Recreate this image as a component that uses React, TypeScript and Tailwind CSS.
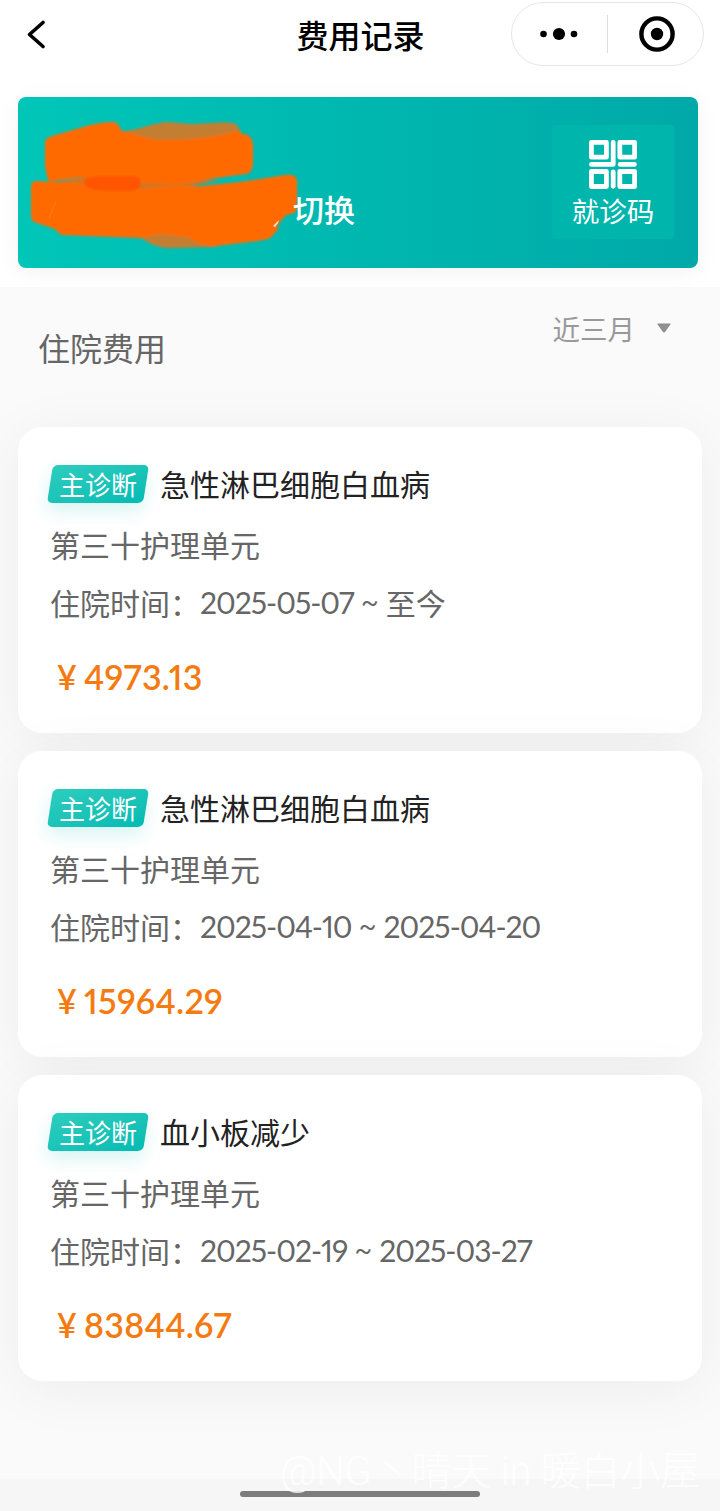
type FeeRecord = {
  diagnosis: string;
  unit: string;
  period: { from: string; to: string };
  amount: string;
};

const records: FeeRecord[] = [
  {
    diagnosis: "急性淋巴细胞白血病",
    unit: "第三十护理单元",
    period: { from: "2025-05-07", to: "至今" },
    amount: "4973.13",
  },
  {
    diagnosis: "急性淋巴细胞白血病",
    unit: "第三十护理单元",
    period: { from: "2025-04-10", to: "2025-04-20" },
    amount: "15964.29",
  },
  {
    diagnosis: "血小板减少",
    unit: "第三十护理单元",
    period: { from: "2025-02-19", to: "2025-03-27" },
    amount: "83844.67",
  },
];

function NavBar() {
  return (
    <header className="flex h-[68px] items-center justify-between pr-4 pl-[26px]">
      <div className="w-[184px]">
        <svg width="20" height="30" viewBox="0 0 20 30" fill="none" stroke="#000" strokeWidth="3.6" strokeLinecap="round" strokeLinejoin="round">
          <path d="M17 3.500 3.500 15.500 17 27.500" />
        </svg>
      </div>
      <h1 className="text-[32px] leading-10 font-medium text-black">费用记录</h1>
      <div className="flex h-16 w-[193px] items-center rounded-full border border-[#e6e6e6] bg-white">
        <div className="flex w-[95px] justify-center">
          <svg width="40" height="14" viewBox="0 0 40 14" fill="#000">
            <circle cx="4.5" cy="7" r="3.3" />
            <circle cx="20" cy="7" r="6.1" />
            <circle cx="35" cy="7" r="3.3" />
          </svg>
        </div>
        <div className="h-[38px] w-px bg-[#dcdcdc]" />
        <div className="flex flex-1 justify-center pl-[3px]">
          <svg width="36" height="36" viewBox="0 0 36 36">
            <circle cx="18" cy="18" r="15.6" fill="none" stroke="#000" strokeWidth="4.4" />
            <circle cx="18" cy="18" r="6.2" fill="#000" />
          </svg>
        </div>
      </div>
    </header>
  );
}

function QrIcon() {
  return (
    <svg width="48" height="49" viewBox="0 0 48 49" fill="none" stroke="#fff" strokeWidth="4.8" strokeLinecap="round" strokeLinejoin="round">
      <rect x="2.4" y="2.4" width="15" height="14.8" />
      <rect x="30.8" y="2.4" width="14.8" height="14.8" />
      <rect x="2.4" y="31.5" width="15" height="15" />
      <rect x="30.8" y="31.5" width="14.8" height="15" />
      <path d="M24.200 2.500V24.400H2.500" />
      <path d="M31.200 24.400h14.200" />
      <path d="M24.200 31.800v14.500" />
    </svg>
  );
}

// Marker strokes that hide the patient's name and card number
function Scribble() {
  return (
    <svg className="absolute top-0 left-0" width="300" height="171" viewBox="18 97 300 171">
      <defs>
        <filter id="soft" x="-5%" y="-5%" width="110%" height="110%">
          <feGaussianBlur stdDeviation="1.1" />
        </filter>
      </defs>
      <g filter="url(#soft)">
        <path fill="#c47e30" d="M125 131C146 128 152 123 168 122L190 124C210 124 230 120 237 125L243 136 200 146 140 144Z" />
        <path fill="#c47e30" d="M134 232C146 243 158 248 170 248L216 247 230 236 190 226Z" />
        <path fill="#d67421" d="M48 184 82 177 140 181 220 180 130 198 46 192Z" />
        <path
          fill="#ff6a00"
          d="M45 142Q45 138 52 136L90 125Q112 120 117 123L122 131C138 134 145 139 160 140 190 140 215 137 238 131L243 134Q253 134 253 148V162Q253 173 246 174L216 178 180 184 120 182 80 177 50 182Q47 181 45 165Z"
        />
        <path
          fill="#ff6a00"
          d="M31 186Q31 181 37 181L80 184 130 190 165 186 200 186 240 182 285 175Q296 174 297 180L297 206Q297 211 294 213L286 215 276 227 280 227Q276 231 274 234 271 238 268 239L258 241 216 246C204 246 196 243 188 237L160 234 140 238 62 235Q58 233 55 229L34 222Q31 220 31 215Z"
        />
        <path fill="#ff5500" d="M84 181Q87 177 98 176H132Q140 175 141 182 141 190 132 191L104 191Q88 190 84 184Z" />
      </g>
      <path d="m273 226 6-6-1 3-3 4Z" fill="#fff" opacity=".8" />
      <path d="m49 219 7-18" stroke="#ff9140" strokeWidth="1" opacity=".4" />
    </svg>
  );
}

function PatientBanner() {
  return (
    <section className="px-[18px] pt-[29px] pb-[19px]">
      <div className="relative flex h-[171px] w-[680px] items-start justify-between rounded-lg bg-gradient-to-r from-[#00c6b8] to-[#00a9a7] pr-6 shadow-[0_4px_24px_rgba(0,0,0,0.05)]">
        <Scribble />
        <span className="relative pt-[90px] pl-[275px] text-[31px] leading-[44px] font-medium text-white">切换</span>
        <button type="button" className="mt-7 flex h-[114px] w-[122px] flex-col items-center rounded bg-[#00b5ac] pt-[15px] text-white">
          <QrIcon />
          <span className="text-[27.5px] leading-[42px]">就诊码</span>
        </button>
      </div>
    </section>
  );
}

function FilterBar() {
  return (
    <div className="flex h-[140px] items-start justify-between pr-[49px] pl-[38px]">
      <h2 className="pt-9 text-[32px] leading-[48px] text-[#666]">住院费用</h2>
      <button type="button" className="flex items-center pt-5 text-[27.5px] leading-[42px] text-[#999]">
        近三月
        <svg className="ml-[22px]" width="14" height="10" viewBox="0 0 14 10" fill="#8f8f8f">
          <path d="M1 .5h12q1 0 .4 1L8 9q-1 1-2 0L.6 1.500Q0 .5 1 .5Z" />
        </svg>
      </button>
    </div>
  );
}

function Num({ children }: { children: string }) {
  return <span className="font-['Lato'] tracking-[-1px] proportional-nums">{children}</span>;
}

function RecordCard({ record }: { record: FeeRecord }) {
  return (
    <article className="h-[306px] rounded-[24px] bg-white pt-[33px] pl-[30px] shadow-[0_8px_60px_rgba(0,0,0,0.055)]">
      <div className="flex h-12 items-center">
        <div className="relative flex h-[38px] w-[100px] items-center justify-center">
          <div className="absolute inset-x-[2px] inset-y-0 -skew-x-[9deg] rounded-[5px] bg-gradient-to-br from-[#2ccdbd] to-[#00bbb3] shadow-[0_8px_18px_rgba(0,190,178,0.16)]" />
          <span className="relative text-[26px] leading-[38px] text-white">主诊断</span>
        </div>
        <h3 className="-mt-0.5 ml-3 text-[30px] leading-[48px] text-[#222]">{record.diagnosis}</h3>
      </div>
      <p className="mt-[7px] pl-0.5 text-[30px] leading-[58px] text-[#666]">{record.unit}</p>
      <p className="flex pl-0.5 text-[30px] leading-[58px] text-[#666]">
        住院时间：<Num>{record.period.from}</Num>
        <span className="w-8 text-center font-['Roboto'] text-[26px]">~</span>
        {record.period.to === "至今" ? record.period.to : <Num>{record.period.to}</Num>}
      </p>
      <p className="mt-5 flex pl-[9px] font-['Lato'] text-[34px] leading-[52px] font-semibold text-[#f47b12]">
        <span className="w-[27px]">¥</span>
        <span className="tracking-[0.3px] proportional-nums">{record.amount}</span>
      </p>
    </article>
  );
}

export default function App() {
  return (
    <div className="relative flex h-[1511px] w-[720px] flex-col overflow-hidden bg-[#fafafa] font-['Noto_Sans_CJK_SC',sans-serif]">
      <div className="bg-white">
        <NavBar />
        <PatientBanner />
      </div>
      <FilterBar />
      <main className="flex flex-col gap-[18px] px-[18px]">
        {records.map((record) => (
          <RecordCard key={record.period.from} record={record} />
        ))}
      </main>
      <footer className="mt-auto flex h-8 justify-center bg-[#f6f6f6] pt-3">
        <div className="h-1.5 w-60 rounded-full bg-[#7d7d7d]" />
      </footer>
      <p className="absolute right-[20px] bottom-[11px] font-['Roboto','Noto_Sans_CJK_SC',sans-serif] text-[40px] leading-[56px] font-light tracking-[-0.2px] whitespace-nowrap text-white/80">
        @NG丶晴天 in 暖白小屋
      </p>
    </div>
  );
}
